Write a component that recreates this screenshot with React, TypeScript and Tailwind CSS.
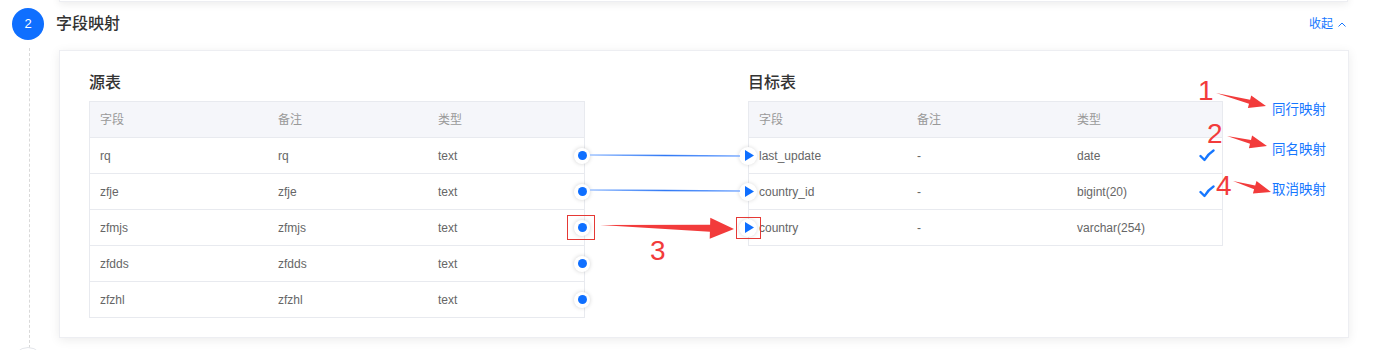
import React from 'react';

type Row = { name: string; note: string; type: string };

const sourceRows: Row[] = [
  { name: 'rq', note: 'rq', type: 'text' },
  { name: 'zfje', note: 'zfje', type: 'text' },
  { name: 'zfmjs', note: 'zfmjs', type: 'text' },
  { name: 'zfdds', note: 'zfdds', type: 'text' },
  { name: 'zfzhl', note: 'zfzhl', type: 'text' },
];

const targetRows: (Row & { checked: boolean })[] = [
  { name: 'last_update', note: '-', type: 'date', checked: true },
  { name: 'country_id', note: '-', type: 'bigint(20)', checked: true },
  { name: 'country', note: '-', type: 'varchar(254)', checked: false },
];

// snipping-tool style arrow: thin tail, widening shaft, solid head
function arrow(x1: number, y1: number, x2: number, y2: number, head: number, headW: number, shaftW: number) {
  const dx = x2 - x1;
  const dy = y2 - y1;
  const len = Math.hypot(dx, dy);
  const ux = dx / len;
  const uy = dy / len;
  const nx = -uy;
  const ny = ux;
  const bx = x2 - ux * head;
  const by = y2 - uy * head;
  const p = (x: number, y: number) => `${x.toFixed(1)},${y.toFixed(1)}`;
  return [
    p(x1, y1),
    p(bx + nx * shaftW, by + ny * shaftW),
    p(bx + nx * headW, by + ny * headW),
    p(x2, y2),
    p(bx - nx * headW, by - ny * headW),
    p(bx - nx * shaftW, by - ny * shaftW),
  ].join(' ');
}

function Check() {
  return (
    <svg width="16" height="13" viewBox="0 0 16 13" className="ml-auto mr-[7px]">
      <path d="M1.5 7 L5.5 11 Q9 5 14.5 1.5" fill="none" stroke="#1677ff" strokeWidth="2.4" strokeLinejoin="round" strokeLinecap="round" />
    </svg>
  );
}

function Dot() {
  return (
    <span className="absolute right-[-6px] top-1/2 -translate-y-1/2 w-4 h-4 rounded-full bg-white shadow-[0_0_4px_rgba(0,0,0,0.18)] flex items-center justify-center">
      <span className="w-[9px] h-[9px] rounded-full bg-[#0f6fff]" />
    </span>
  );
}

function Play() {
  return (
    <span className="absolute left-[-10px] top-1/2 -translate-y-1/2 w-[18px] h-[18px] rounded-full bg-white shadow-[0_0_4px_rgba(0,0,0,0.15)] flex items-center justify-center">
      <svg width="9" height="11" viewBox="0 0 9 11" className="ml-[2px]">
        <path d="M0 0 L9 5.5 L0 11 Z" fill="#0f6fff" />
      </svg>
    </span>
  );
}

export default function App() {
  return (
    <div
      className="relative w-[1388px] h-[350px] bg-white overflow-hidden text-[#333]"
      style={{ fontFamily: '"Liberation Sans", "Noto Sans CJK SC", sans-serif' }}
    >
      {/* bottom of previous step card */}
      <div className="absolute left-[59px] top-[-30px] w-[1289px] h-[32px] bg-white border border-[#edeef2] shadow-[0_2px_8px_rgba(0,0,0,0.08)]" />

      {/* step header */}
      <div className="flex items-center h-[48px] pl-[12px] pr-[42px]">
        <div className="w-8 h-8 rounded-full bg-[#0f6fff] text-white text-[13px] flex items-center justify-center">2</div>
        <div className="ml-[12px] text-[16px] font-medium">字段映射</div>
        <button className="ml-auto flex items-center gap-[5px] text-[12px] text-[#1677ff]">
          收起
          <svg width="8" height="5" viewBox="0 0 8 5">
            <path d="M0.5 4.5 L4 1 L7.5 4.5" fill="none" stroke="#1677ff" strokeWidth="1" />
          </svg>
        </button>
      </div>

      <div className="flex mt-[2px]">
        <div className="w-[59px] shrink-0">
          <div className="ml-[29px] mt-[-2px] h-[300px] border-l border-dashed border-[#d9d9d9]" />
        </div>

        <div className="w-[1290px] h-[288px] bg-white border border-[#edeef2] shadow-[0_2px_10px_rgba(0,0,0,0.08)] pl-[29px] pt-[21px] flex">
          {/* source */}
          <div className="w-[496px] shrink-0">
            <div className="h-[22px] leading-[22px] text-[16px] font-medium mb-[7px]">源表</div>
            <div className="border-l border-r border-t border-[#e8eaef] text-[12px]">
              <div className="h-[36px] flex items-center bg-[#f5f6fa] border-b border-[#e8eaef] pl-[10px] text-[#999]">
                <div className="w-[178px]">字段</div>
                <div className="w-[160px]">备注</div>
                <div>类型</div>
              </div>
              {sourceRows.map((r) => (
                <div key={r.name} className="relative h-[36px] flex items-center border-b border-[#e8eaef] pl-[10px] text-[#666]">
                  <div className="w-[178px]">{r.name}</div>
                  <div className="w-[160px]">{r.note}</div>
                  <div>{r.type}</div>
                  <Dot />
                </div>
              ))}
            </div>
          </div>

          {/* target */}
          <div className="w-[475px] shrink-0 ml-[163px]">
            <div className="h-[22px] leading-[22px] text-[16px] font-medium mb-[7px]">目标表</div>
            <div className="border-l border-r border-t border-[#e8eaef] text-[12px]">
              <div className="h-[36px] flex items-center bg-[#f5f6fa] border-b border-[#e8eaef] pl-[10px] text-[#999]">
                <div className="w-[158px]">字段</div>
                <div className="w-[160px]">备注</div>
                <div>类型</div>
              </div>
              {targetRows.map((r) => (
                <div key={r.name} className="relative h-[36px] flex items-center border-b border-[#e8eaef] pl-[10px] text-[#666]">
                  <div className="w-[158px]">{r.name}</div>
                  <div className="w-[160px]">{r.note}</div>
                  <div>{r.type}</div>
                  {r.checked && <Check />}
                  <Play />
                </div>
              ))}
            </div>
          </div>

          {/* actions */}
          <div className="ml-[49px] mt-[28px] flex flex-col gap-[20px] text-[13.5px] text-[#1677ff] leading-[20px]">
            <button className="text-left">同行映射</button>
            <button className="text-left">同名映射</button>
            <button className="text-left">取消映射</button>
          </div>
        </div>
      </div>

      {/* next step circle */}
      <div className="absolute left-[12px] top-[347px] w-8 h-8 rounded-full border border-[#e3e5ea] bg-white" />

      {/* mapping lines and annotations */}
      <svg className="absolute left-0 top-0 pointer-events-none" width="1388" height="350">
        <defs>
          <linearGradient id="ln" x1="0" x2="1" y1="0" y2="0">
            <stop offset="0" stopColor="#9fc3ff" />
            <stop offset="0.5" stopColor="#2f78f5" />
            <stop offset="1" stopColor="#7eadff" />
          </linearGradient>
        </defs>
        <line x1="590" y1="155" x2="740" y2="156" stroke="url(#ln)" strokeWidth="1.5" />
        <line x1="590" y1="190" x2="740" y2="191" stroke="url(#ln)" strokeWidth="1.5" />

        <rect x="567.5" y="215.5" width="27" height="24" fill="none" stroke="#e53935" strokeWidth="1" />
        <rect x="736.5" y="217.5" width="24" height="21" fill="none" stroke="#e53935" strokeWidth="1" />

        <polygon points={arrow(600, 225, 734, 229, 24, 10.5, 3.5)} fill="#f23b3b" />
        <polygon points={arrow(1216, 93, 1266, 106, 17, 6.5, 2)} fill="#f23b3b" />
        <polygon points={arrow(1227, 136, 1267, 146, 17, 6.5, 2)} fill="#f23b3b" />
        <polygon points={arrow(1233, 181, 1271, 192, 17, 6.5, 2)} fill="#f23b3b" />
      </svg>

      <span className="absolute left-[1198px] top-[75px] text-[28px] leading-[32px] text-[#f23b3b]">1</span>
      <span className="absolute left-[1207px] top-[118px] text-[28px] leading-[32px] text-[#f23b3b]">2</span>
      <span className="absolute left-[650px] top-[235px] text-[28px] leading-[32px] text-[#f23b3b]">3</span>
      <span className="absolute left-[1216px] top-[170px] text-[28px] leading-[32px] text-[#f23b3b]">4</span>
    </div>
  );
}
